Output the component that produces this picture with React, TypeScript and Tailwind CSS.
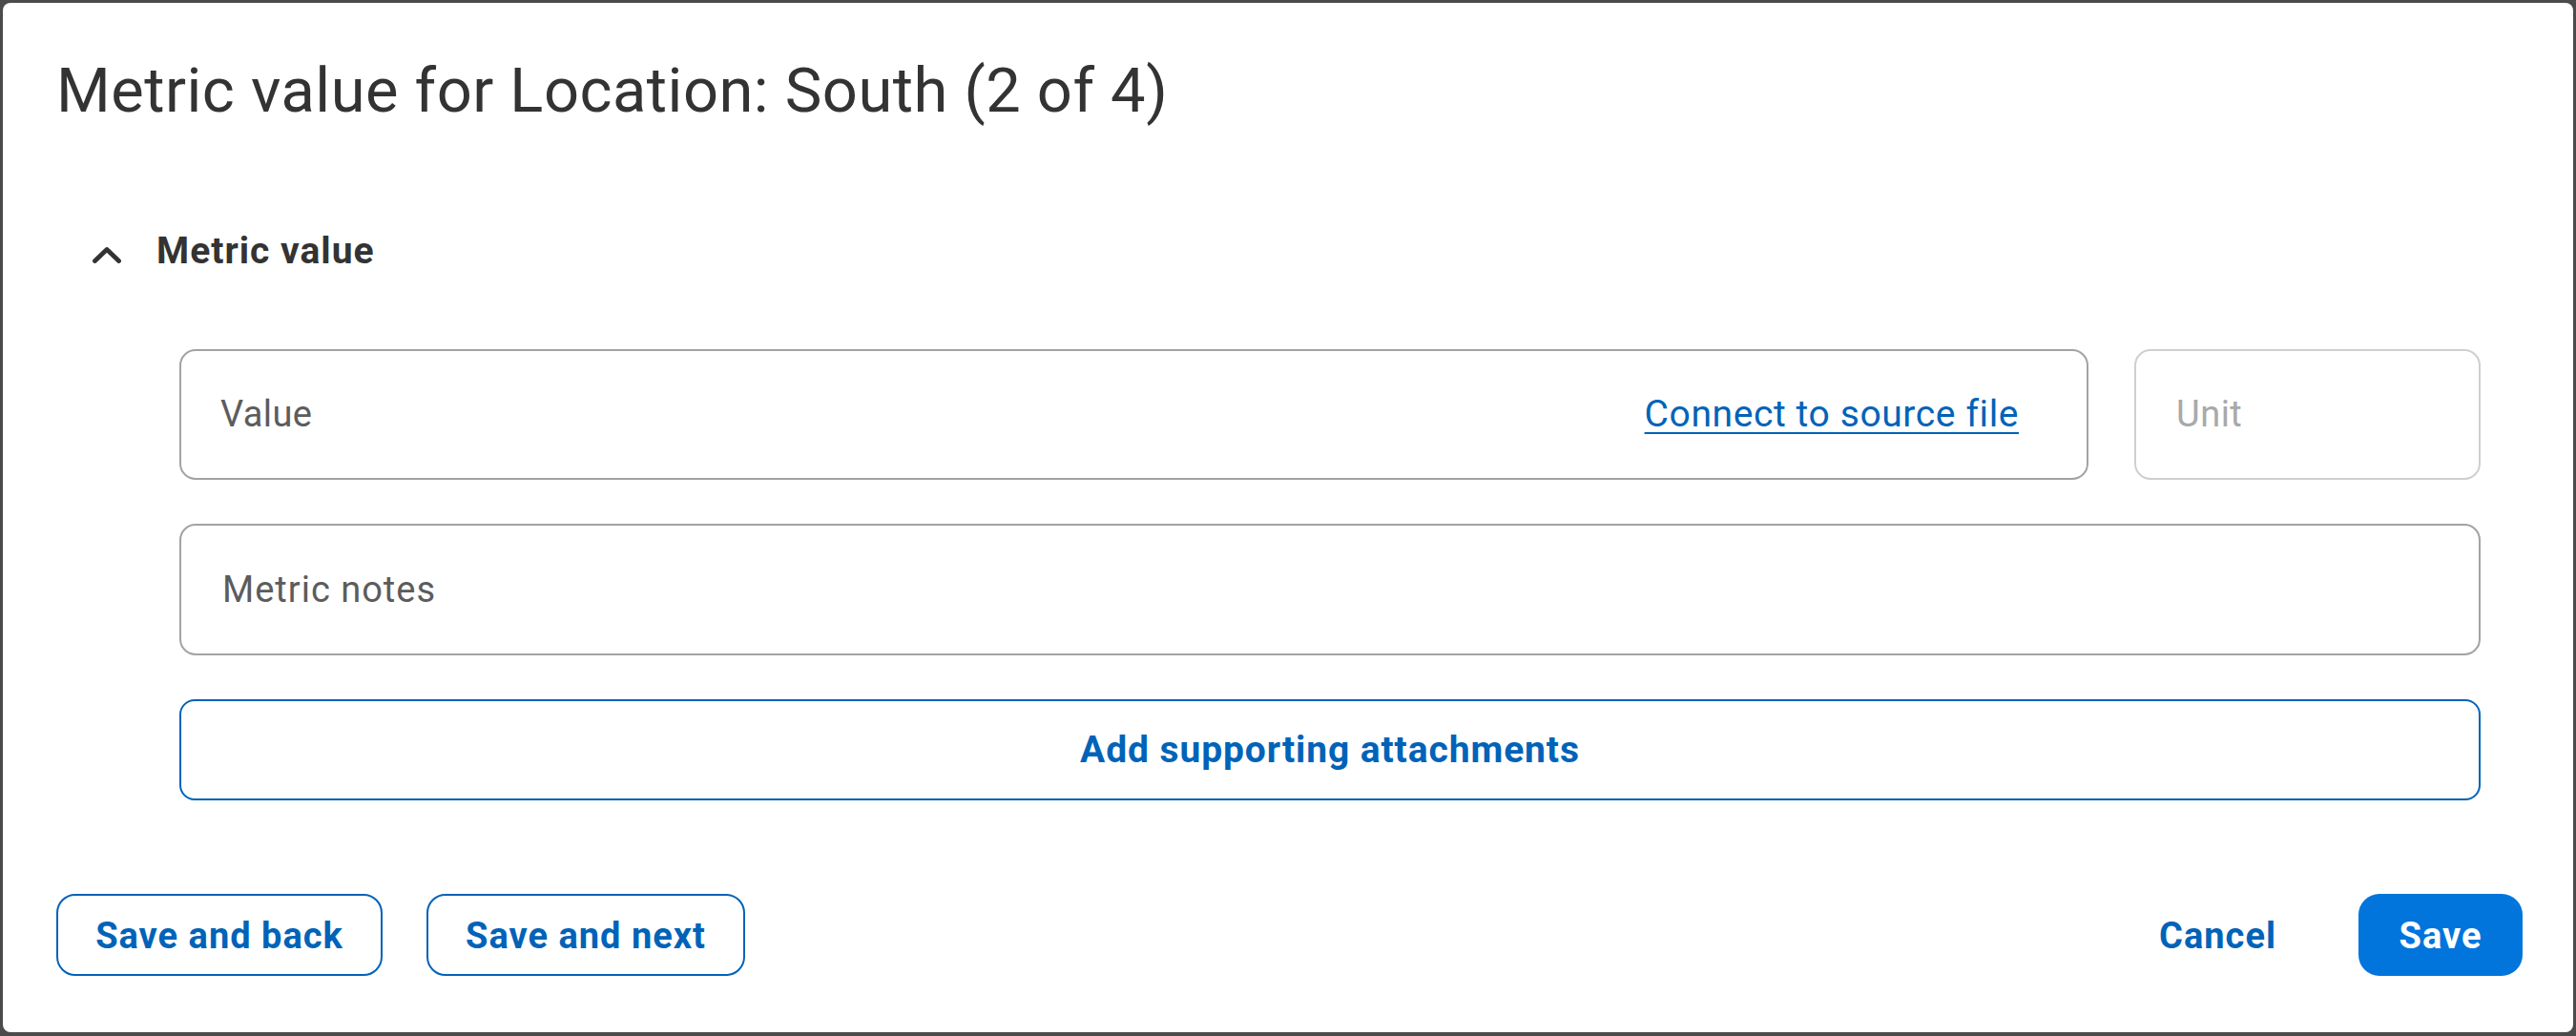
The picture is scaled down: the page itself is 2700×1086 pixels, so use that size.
import React from "react";

export default function App() {
  return (
    <div className="w-[2700px] h-[1086px] bg-[#4b4b4b] pt-[3px] pl-[3px] pr-[3px] pb-[4px]" style={{ fontFamily: "Roboto, 'Noto Sans', sans-serif" }}>
      <div className="h-full w-full bg-white rounded-[8px] pl-[56px] pr-[53px] pt-[54px] flex flex-col">
        <h1 className="text-[65px] leading-[76px] h-[76px] text-[#333333] font-normal tracking-[0.5px]">
          Metric value for Location: South (2 of 4)
        </h1>

        <div className="mt-[107px] h-[46px] flex items-center">
          <div className="w-[38px]" />
          <svg width="30" height="18" viewBox="0 0 30 18" className="mt-[8px]">
            <polyline points="2.5,15.5 15,3.5 27.5,15.5" fill="none" stroke="#333333" strokeWidth="4.8" strokeLinecap="round" strokeLinejoin="round" />
          </svg>
          <span className="ml-[37px] text-[39px] leading-[46px] font-bold text-[#333333] tracking-[1px]">Metric value</span>
        </div>

        <div className="ml-[129px] mr-[44px] mt-[80px] flex flex-col gap-[46px]">
          <div className="flex gap-[48px]">
            <div className="flex-1 h-[137px] border-2 border-[#a3a3a3] rounded-[17px] pl-[41px] pr-[71px] flex items-center justify-between">
              <span className="text-[38px] text-[#5c5c5c] tracking-[0.4px]">Value</span>
              <span className="text-[39px] text-[#0063b8] underline underline-offset-[6px] decoration-2 tracking-[0.6px]">Connect to source file</span>
            </div>
            <div className="w-[363px] h-[137px] border-2 border-[#cfcfcf] rounded-[17px] pl-[42px] flex items-center">
              <span className="text-[38px] text-[#a9a9a9] tracking-[0.5px]">Unit</span>
            </div>
          </div>
          <div className="h-[138px] border-2 border-[#a3a3a3] rounded-[17px] pl-[43px] flex items-center">
            <span className="text-[38px] text-[#5c5c5c] tracking-[1px]">Metric notes</span>
          </div>
          <button className="h-[106px] border-[2.5px] border-[#0063b8] rounded-[16px] flex items-center justify-center text-[39px] font-bold text-[#0063b8] tracking-[0.9px]">
            Add supporting attachments
          </button>
        </div>

        <div className="mt-[98px] flex items-center">
          <button className="h-[86px] w-[342px] border-[2.5px] border-[#0063b8] rounded-[20px] text-[38px] font-bold text-[#0063b8] flex items-center justify-center tracking-[1px] pt-[3px]">
            Save and back
          </button>
          <button className="ml-[46px] h-[86px] w-[334px] border-[2.5px] border-[#0063b8] rounded-[20px] text-[38px] font-bold text-[#0063b8] flex items-center justify-center tracking-[1px] pt-[3px]">
            Save and next
          </button>
          <div className="flex-1" />
          <button className="h-[86px] px-[4px] text-[38px] font-bold text-[#0063b8] flex items-center justify-center tracking-[1px] pt-[3px]">
            Cancel
          </button>
          <button className="ml-[82px] h-[86px] w-[172px] bg-[#0175dc] rounded-[22px] text-[38px] font-bold text-white flex items-center justify-center tracking-[1px] pt-[3px]">
            Save
          </button>
        </div>
      </div>
    </div>
  );
}
